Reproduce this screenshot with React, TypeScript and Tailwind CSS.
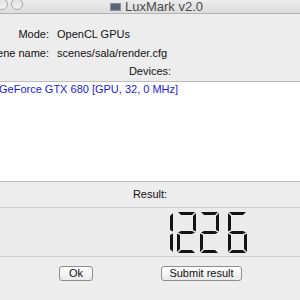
import React from "react";

type Pt = [number, number];

function segs(x0: number, w: number, y0: number, y1: number, on: string): Pt[][] {
  const t = 3;
  const g = 1;
  const ym = (y0 + y1) / 2;
  const all: Record<string, Pt[]> = {
    a: [[x0 + g, y0], [x0 + w - g, y0], [x0 + w - g - t, y0 + t], [x0 + g + t, y0 + t]],
    d: [[x0 + g, y1], [x0 + w - g, y1], [x0 + w - g - t, y1 - t], [x0 + g + t, y1 - t]],
    f: [[x0, y0 + g], [x0 + t, y0 + g + t], [x0 + t, ym - g - t / 2], [x0, ym - g]],
    e: [[x0, ym + g], [x0 + t, ym + g + t / 2], [x0 + t, y1 - g - t], [x0, y1 - g]],
    b: [[x0 + w, y0 + g], [x0 + w - t, y0 + g + t], [x0 + w - t, ym - g - t / 2], [x0 + w, ym - g]],
    c: [[x0 + w, ym + g], [x0 + w - t, ym + g + t / 2], [x0 + w - t, y1 - g - t], [x0 + w, y1 - g]],
    g: [[x0 + g, ym], [x0 + g + t, ym - t / 2], [x0 + w - g - t, ym - t / 2], [x0 + w - g, ym], [x0 + w - g - t, ym + t / 2], [x0 + g + t, ym + t / 2]],
  };
  return on.split("").map((k) => all[k]);
}

const DIGITS: { x: number; s: string }[] = [
  { x: 154, s: "bc" },
  { x: 177, s: "abged" },
  { x: 200, s: "abged" },
  { x: 228, s: "afgedc" },
];

function Lcd() {
  const polys: Pt[][] = [];
  DIGITS.forEach((d) => polys.push(...segs(d.x, 19, 4, 45, d.s)));
  return (
    <svg width="300" height="48" viewBox="0 0 300 48" className="block">
      {polys.map((p, i) => (
        <polygon key={i} points={p.map((q) => q.join(",")).join(" ")} fill="#141414" />
      ))}
    </svg>
  );
}

const font = { fontFamily: '"Liberation Sans", Arial, sans-serif' };

export default function App() {
  return (
    <div className="w-[300px] h-[300px] overflow-hidden bg-[#ededed] text-[11px] text-[#111]" style={font}>
      {/* title bar */}
      <div className="h-[14px] border-b border-[#b4b4b4] bg-gradient-to-b from-[#ececec] to-[#dcdcdc] flex items-start relative">
        <div className="flex gap-[3px] -ml-[4px] -mt-[2px]">
          <div className="w-[12px] h-[12px] rounded-full border border-[#a9a9a9] bg-gradient-to-b from-[#e0e0e0] to-[#f4f4f4]" />
          <div className="w-[12px] h-[12px] rounded-full border border-[#a9a9a9] bg-gradient-to-b from-[#e0e0e0] to-[#f4f4f4]" />
        </div>
        <div className="flex-1 flex justify-center items-center gap-[4px] pr-[10px] h-[13px]">
          <div className="w-[11px] h-[8px] bg-[#5a6478] border border-[#8a8f99]" />
          <span className="text-[13px] text-[#4a4a4a] leading-none">LuxMark v2.0</span>
        </div>
      </div>

      {/* form */}
      <div className="pt-[11px]">
        <div className="grid grid-cols-[49px_1fr] gap-x-[8px]">
          <div className="h-[19px] flex items-center justify-end whitespace-nowrap">Mode:</div>
          <div className="h-[19px] flex items-center">OpenCL GPUs</div>
          <div className="h-[18px] flex items-center justify-end whitespace-nowrap">Scene name:</div>
          <div className="h-[18px] flex items-center">scenes/sala/render.cfg</div>
        </div>
        <div className="h-[18px] flex items-center justify-center">Devices:</div>
      </div>

      {/* device list */}
      <div className="mt-px h-[101px] bg-white border-y border-[#bdbdbd]">
        <div className="h-[14px] leading-[14px] -ml-[1px] text-[#1a1ae0] whitespace-nowrap">GeForce GTX 680 [GPU, 32, 0 MHz]</div>
      </div>

      {/* result */}
      <div className="h-[25px] flex items-center justify-center">Result:</div>
      <div className="h-[50px] border-y border-[#cdcdcd] bg-[#ebebeb]">
        <Lcd />
      </div>

      {/* buttons */}
      <div className="relative h-[40px]">
        <div className="flex pt-[9px]">
          <div className="ml-[59px] w-[34px] h-[15px] rounded-[3px] border border-[#8e8e8e] bg-gradient-to-b from-white to-[#e9e9e9] flex items-center justify-center leading-none">Ok</div>
          <div className="ml-[68px] w-[81px] h-[15px] rounded-[3px] border border-[#8e8e8e] bg-gradient-to-b from-white to-[#e9e9e9] flex items-center justify-center leading-none">Submit result</div>
        </div>
      </div>
    </div>
  );
}
